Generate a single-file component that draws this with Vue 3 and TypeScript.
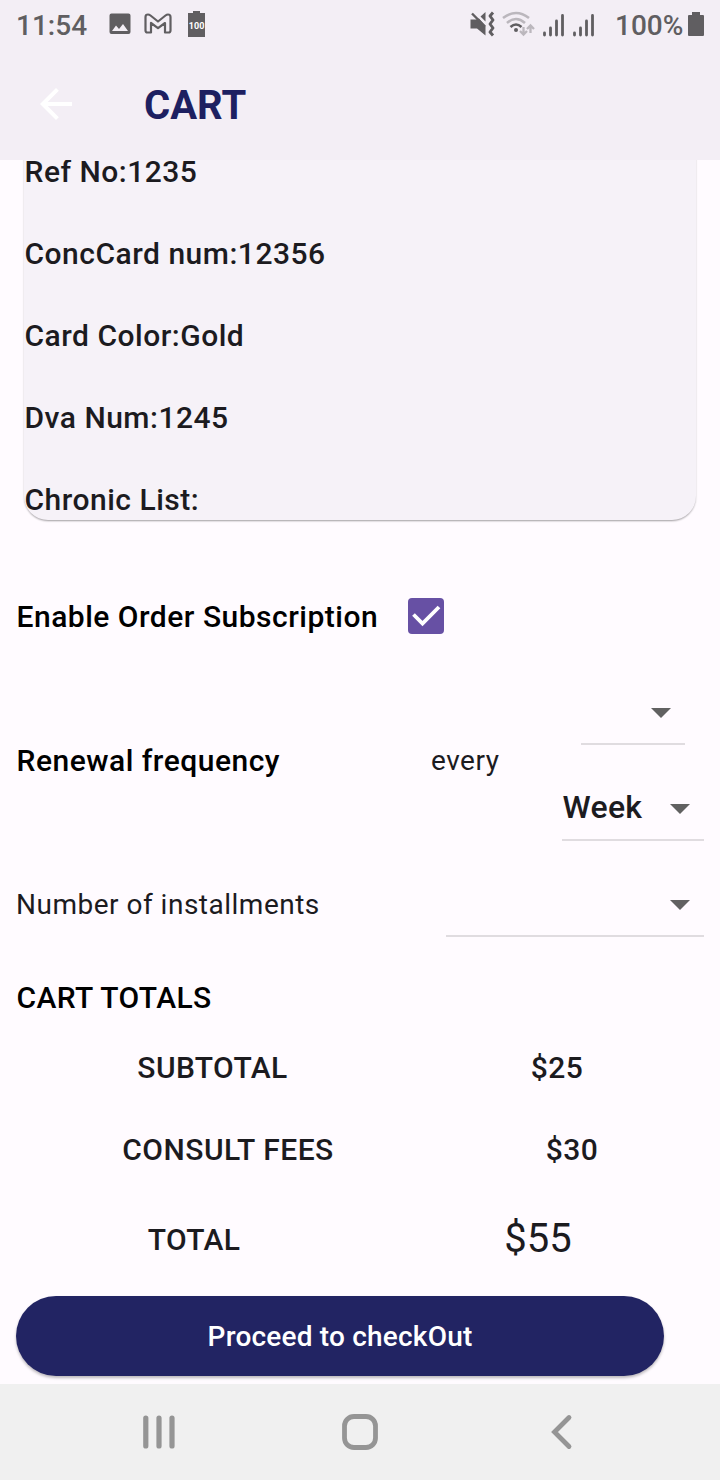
<script setup lang="ts">
import { ref } from 'vue'

const details: string[] = [
  'Ref No:1235',
  'ConcCard num:12356',
  'Card Color:Gold',
  'Dva Num:1245',
  'Chronic List:',
]
const signals: number[] = [0, 1]
const subscribed = ref(true)
</script>

<template>
  <div class="screen">
    <header class="top">
      <div class="status">
        <span class="clock">11:54</span>
        <svg class="s-image" width="22" height="22" viewBox="0 0 22 22">
          <path fill="#605e61" fill-rule="evenodd" d="M2.500 0.500h17a2 2 0 0 1 2 2v16.500a2 2 0 0 1-2 2h-17a2 2 0 0 1-2-2v-16.500a2 2 0 0 1 2-2zM3 18h16l-5-7-4 5-3-3.500z" />
        </svg>
        <svg class="s-mail" width="28" height="22" viewBox="0 0 28 22">
          <path fill="none" stroke="#605e61" stroke-width="2.200" stroke-linejoin="round" d="M1.500 17.500V4Q1.500 1.500 4 1.500Q5.200 1.500 6.500 2.500L14 8.500L21.500 2.500Q22.800 1.500 24 1.500Q26.500 1.500 26.500 4V17.500Q26.500 19.500 24.500 19.500H21V10L14 15.200L7 10V19.500H3.500Q1.500 19.500 1.500 17.500z" />
        </svg>
        <svg class="s-hundred" width="18" height="26" viewBox="0 0 18 26">
          <path fill="#605e61" d="M5 0h7v2h5v24H0V2H5z" />
          <text x="8.600" y="18" text-anchor="middle" textLength="15.500" lengthAdjust="spacingAndGlyphs">100</text>
        </svg>
        <span class="gap"></span>
        <svg class="s-mute" width="25" height="26" viewBox="0 0 25 26">
          <path fill="#605e61" d="M0.500 8.500h5.500l3-1L15.500 15v9.500L7 17.500H0.500zM10.500 5.500L15.500 1v9.500z" />
          <path fill="none" stroke="#605e61" stroke-width="2.400" d="M2 2.500L15 15.500" />
          <path fill="none" stroke="#605e61" stroke-width="2.900" stroke-linejoin="round" d="M23 1.500l-3 3.500 3 4-3 4 3 4-3 4 3 3.500" />
        </svg>
        <svg class="s-wifi" width="34" height="26" viewBox="0 0 34 26">
          <g fill="none" stroke-width="2.600">
            <path stroke="#bbb7bd" d="M1 7Q14-3 27 7M5 12Q14 4 23 12" />
            <path stroke="#605e61" d="M8.500 16Q14 11 19.500 16" />
            <path stroke="#bbb7bd" stroke-width="2.300" d="M21.500 16v7M18 20l3.500 3.500 3.500-3.500M28.500 22v-7M25 18l3.500-3.500 3.500 3.500" />
          </g>
          <circle cx="14" cy="19" r="2" fill="#605e61" />
        </svg>
        <svg v-for="s in signals" :key="s" class="s-signal" width="24" height="26" viewBox="0 0 24 26">
          <path fill="none" stroke="#605e61" stroke-width="2.800" stroke-linecap="round" d="M2.500 21v2M8.500 16v7M14.500 9v14M20.500 3.500v19.500" />
        </svg>
        <span class="percent">100%</span>
        <svg class="s-battery" width="16" height="24" viewBox="0 0 16 24">
          <path fill="#605e61" d="M4 0h8v3h3q1 0 1 1v19q0 1-1 1H1q-1 0-1-1V4q0-1 1-1h3z" />
        </svg>
      </div>
      <div class="appbar">
        <svg width="48" height="48" viewBox="0 0 24 24">
          <path fill="#fff" d="M20 11H7.830l5.590-5.590L12 4l-8 8 8 8 1.410-1.410L7.830 13H20v-2z" />
        </svg>
        <h1>CART</h1>
      </div>
    </header>

    <main>
      <section class="card">
        <p v-for="d in details" :key="d">{{ d }}</p>
      </section>

      <section class="subscribe">
        <span class="label enable">Enable Order Subscription</span>
        <button class="check" role="checkbox" :aria-checked="subscribed" @click="subscribed = !subscribed">
          <svg v-if="subscribed" width="36" height="36" viewBox="0 0 36 36">
            <path fill="none" stroke="#fff" stroke-width="3.800" d="M5.500 16.500L14.500 25.500L31 9" />
          </svg>
        </button>
      </section>

      <section class="renewal">
        <span class="label frequency">Renewal frequency</span>
        <span class="plain every">every</span>
        <div class="selects">
          <div class="select count">
            <svg width="48" height="48" viewBox="0 0 24 24"><path fill="#616161" d="M7 10l5 5 5-5z" /></svg>
          </div>
          <div class="select period">
            <span class="week">Week</span>
            <svg width="48" height="48" viewBox="0 0 24 24"><path fill="#616161" d="M7 10l5 5 5-5z" /></svg>
          </div>
        </div>
      </section>

      <section class="installments">
        <span class="plain number">Number of installments</span>
        <div class="select amount">
          <svg width="48" height="48" viewBox="0 0 24 24"><path fill="#616161" d="M7 10l5 5 5-5z" /></svg>
        </div>
      </section>

      <h2>CART TOTALS</h2>
      <div class="line sub"><span>SUBTOTAL</span><span>$25</span></div>
      <div class="line fees"><span>CONSULT FEES</span><span>$30</span></div>
      <div class="line total"><span>TOTAL</span><span class="sum">$55</span></div>
      <button class="checkout">Proceed to checkOut</button>
    </main>

    <nav>
      <svg width="36" height="36" viewBox="0 0 36 36">
        <path fill="none" stroke="#959595" stroke-width="5.200" stroke-linecap="round" d="M4.800 4v28M18 4v28M31 4v28" />
      </svg>
      <svg width="36" height="36" viewBox="0 0 36 36">
        <rect x="2.500" y="2.500" width="31" height="31" rx="9.500" fill="none" stroke="#959595" stroke-width="4.800" />
      </svg>
      <svg width="36" height="36" viewBox="0 0 36 36">
        <path fill="none" stroke="#959595" stroke-width="4.800" stroke-linecap="round" d="M26 3.500L11.500 18L26 32.500" />
      </svg>
    </nav>
  </div>
</template>

<style>
body {
  margin: 0;
}
</style>

<style scoped>
.screen {
  width: 720px;
  height: 1480px;
  display: flex;
  flex-direction: column;
  overflow: hidden;
  background: #fffbff;
  color: #1c1b1f;
  font-family: Roboto, 'Liberation Sans', sans-serif;
}
svg {
  display: block;
  flex: none;
}
h1, h2, p {
  margin: 0;
}
span {
  white-space: nowrap;
}
button {
  border: 0;
  padding: 0;
  font-family: inherit;
}
.top {
  height: 160px;
  flex: none;
  background: #f3eef5;
}
.status {
  height: 48px;
  display: flex;
  align-items: flex-start;
  color: #605e61;
  font-size: 28px;
  font-weight: 500;
  line-height: 51px;
}
.clock {
  width: 93px;
  margin-left: 16px;
}
.s-image { margin-top: 13px; }
.s-mail { margin: 13px 0 0 13px; }
.s-hundred { margin: 11px 0 0 16px; }
.s-hundred text {
  font: 700 9.500px Roboto, sans-serif;
  fill: #fff;
}
.gap { flex: 1; }
.s-mute { margin-top: 11px; }
.s-wifi { margin: 11px 6px 0 7px; }
.s-signal { margin: 12px 6px 0 0; }
.percent {
  width: 73px;
  margin-left: 13px;
}
.s-battery { margin: 12px 16px 0 0; }
.appbar {
  height: 112px;
  display: flex;
  align-items: center;
  padding-left: 32px;
}
h1 {
  margin: 3px 0 0 64px;
  color: #1d2061;
  font-size: 40px;
  font-weight: 700;
  line-height: 48px;
}
main {
  flex: 1;
  min-height: 0;
  overflow: hidden;
}
.card {
  height: 408px;
  box-sizing: border-box;
  margin: -48px 24px 0;
  padding-top: 40px;
  display: flex;
  flex-direction: column;
  gap: 42px;
  border-radius: 24px;
  background: #f6f2f8;
  box-shadow: 0 2px 2px -1px #0003, 0 1px 2px #0003;
}
.card p {
  height: 40px;
  flex: none;
  padding-left: 0.5px;
  font-size: 30px;
  font-weight: 500;
  line-height: 40px;
  letter-spacing: 0.5px;
}
.subscribe {
  height: 96px;
  margin-top: 48px;
  padding-left: 16.500px;
  display: flex;
  align-items: center;
}
.label {
  color: #000;
  font-size: 30px;
  font-weight: 500;
  letter-spacing: 0.5px;
}
.enable { width: 391.500px; }
.check {
  width: 36px;
  height: 36px;
  border-radius: 4px;
  background: #6750a4;
}
.renewal {
  height: 192px;
  display: flex;
  align-items: center;
  padding-left: 16.500px;
}
.frequency { width: 414.500px; }
.plain {
  font-size: 28px;
  letter-spacing: 0.5px;
}
.every { width: 131px; }
.selects { width: 142px; }
.select {
  height: 96px;
  box-sizing: border-box;
  padding-top: 24px;
  display: flex;
  justify-content: flex-end;
  background: linear-gradient(#e0dce0, #e0dce0) 0 79px / 100% 2px no-repeat;
}
.count {
  width: 104px;
  margin-left: 19px;
}
.week {
  flex: 1;
  padding-left: 0.500px;
  font-size: 32px;
  font-weight: 500;
  line-height: 47px;
  letter-spacing: 0.3px;
}
.installments {
  height: 96px;
  padding: 0 16px;
  display: flex;
  align-items: center;
  justify-content: space-between;
}
.amount { width: 258px; }
h2 {
  height: 44px;
  margin: 24px 0 0 16.500px;
  color: #000;
  font-size: 30px;
  font-weight: 500;
  line-height: 44px;
  letter-spacing: 0.4px;
}
.line {
  height: 82px;
  display: grid;
  grid-template-columns: 425px 264px;
  align-items: center;
  justify-items: center;
  font-size: 30px;
  font-weight: 500;
  letter-spacing: 0.4px;
}
.sub { margin-top: 6px; }
.fees {
  grid-template-columns: 456px 232px;
  letter-spacing: 0.5px;
}
.total {
  height: 98px;
  grid-template-columns: 388px 300px;
  letter-spacing: 0.3px;
}
.sum {
  margin-top: -2px;
  font-size: 40px;
  font-weight: 400;
  letter-spacing: 0;
}
.checkout {
  display: block;
  width: 648px;
  height: 80px;
  margin: 8px 0 0 16px;
  border-radius: 40px;
  color: #fff;
  background: #222463;
  font-size: 28px;
  font-weight: 500;
  letter-spacing: 0.2px;
  box-shadow: 0 2px 3px #0004;
}
nav {
  height: 96px;
  flex: none;
  display: flex;
  align-items: center;
  justify-content: center;
  gap: 165px;
  background: #f0f0f0;
}
</style>
